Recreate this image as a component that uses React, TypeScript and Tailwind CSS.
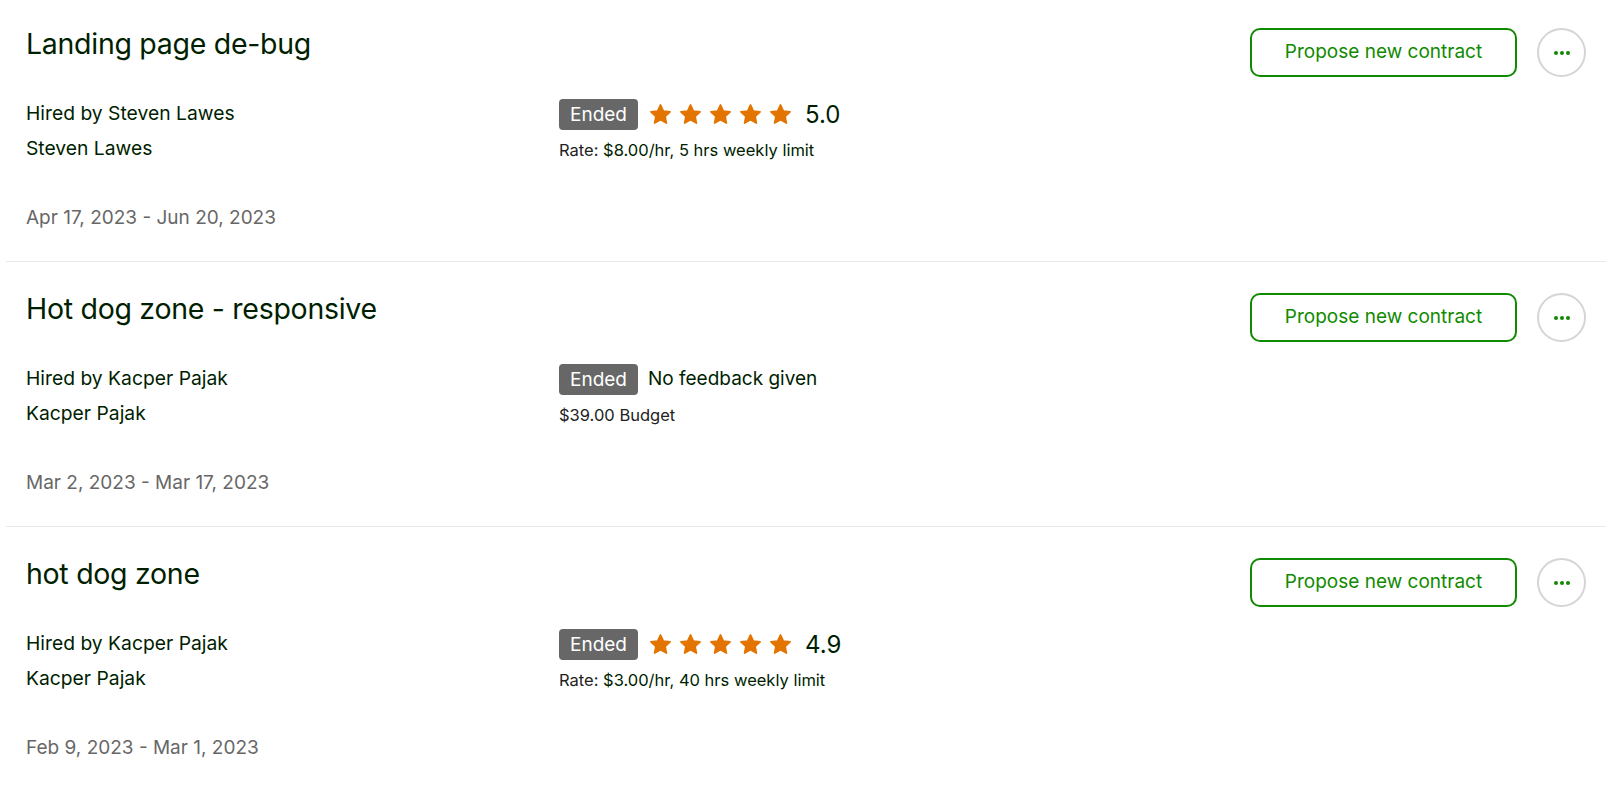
import React from "react";

type Contract = {
  title: string;
  client: string;
  dates: string;
  rating?: number;
  terms: React.ReactNode;
};

const contracts: Contract[] = [
  {
    title: "Landing page de-bug",
    client: "Steven Lawes",
    dates: "Apr 17, 2023 - Jun 20, 2023",
    rating: 5.0,
    terms: (
      <>
        Rate: <span className="text-[#001e00]">$8.00/hr, 5 hrs weekly limit</span>
      </>
    ),
  },
  {
    title: "Hot dog zone - responsive",
    client: "Kacper Pajak",
    dates: "Mar 2, 2023 - Mar 17, 2023",
    terms: <>$39.00 Budget</>,
  },
  {
    title: "hot dog zone",
    client: "Kacper Pajak",
    dates: "Feb 9, 2023 - Mar 1, 2023",
    rating: 4.9,
    terms: (
      <>
        Rate: <span className="text-[#001e00]">$3.00/hr, 40 hrs weekly limit</span>
      </>
    ),
  },
];

function Star() {
  return (
    <svg viewBox="0 0 24 24" className="w-[25px] h-[25px]">
      <path
        d="M12 2.8l2.75 5.9 6.45.78-4.75 4.44 1.22 6.38L12 17.15 6.33 20.3l1.22-6.38L2.8 9.48l6.45-.78L12 2.8z"
        fill="#e37400"
        stroke="#e37400"
        strokeWidth="1.6"
        strokeLinejoin="round"
      />
    </svg>
  );
}

function ContractRow({ c }: { c: Contract }) {
  return (
    <div className="flex justify-between items-start px-5 pt-[30px] pb-[31px] border-b border-[#e4ebe4] first:pt-[27px]">
      <div className="flex-1">
        <h2 className="text-[28.5px] leading-[34px] text-[#001e00] tracking-[-0.01em]">{c.title}</h2>
        <div className="grid grid-cols-[533px_1fr] mt-[40px]">
          <div className="text-[19.3px] leading-6 text-[#001e00]">
            <div>Hired by {c.client}</div>
            <div className="mt-[11px]">{c.client}</div>
          </div>
          <div>
            <div className="flex items-center h-[31px] -mt-[2px]">
              <span className="bg-[#676767] text-white text-[19px] leading-[31px] h-[31px] px-[11px] rounded-[4px]">
                Ended
              </span>
              {c.rating !== undefined ? (
                <>
                  <div className="flex gap-[5px] ml-[10px]">
                    <Star />
                    <Star />
                    <Star />
                    <Star />
                    <Star />
                  </div>
                  <span className="ml-[12px] text-[24px] text-[#001e00]">{c.rating.toFixed(1)}</span>
                </>
              ) : (
                <span className="ml-[10px] text-[19px] text-[#001e00]">No feedback given</span>
              )}
            </div>
            <div className="mt-[10px] text-[16.5px] leading-5 text-[#222]">{c.terms}</div>
          </div>
        </div>
        <div className="mt-[46px] text-[19px] leading-6 text-[#676767]">{c.dates}</div>
      </div>
      <div className="flex items-center gap-5 mt-[1px]">
        <button className="w-[267px] h-[49px] border-2 border-[#108a00] rounded-[10px] text-[#108a00] text-[19px]">
          Propose new contract
        </button>
        <button className="w-[49px] h-[49px] rounded-full border-2 border-[#d5d5d5] flex items-center justify-center gap-[2px]">
          <span className="w-[4px] h-[4px] rounded-full bg-[#108a00]" />
          <span className="w-[4px] h-[4px] rounded-full bg-[#108a00]" />
          <span className="w-[4px] h-[4px] rounded-full bg-[#108a00]" />
        </button>
      </div>
    </div>
  );
}

export default function App() {
  return (
    <div className="bg-white min-h-screen" style={{ fontFamily: "Inter, 'Liberation Sans', sans-serif" }}>
      <div className="ml-[6px] mr-[15px]">
        {contracts.map((c) => (
          <ContractRow key={c.title} c={c} />
        ))}
      </div>
    </div>
  );
}
